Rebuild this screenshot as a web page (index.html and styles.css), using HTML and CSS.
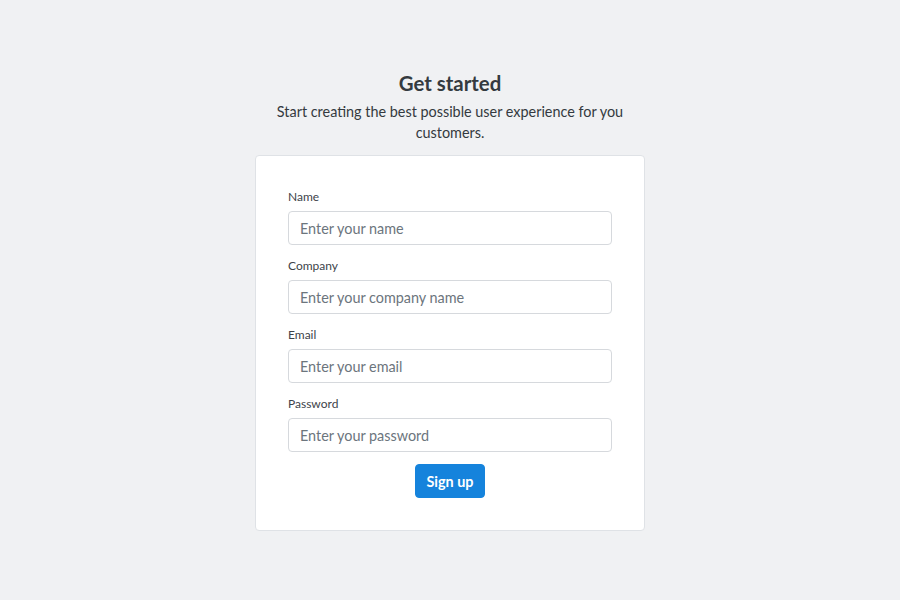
FILE: index.html
```html
<!DOCTYPE html>
<html lang="en">
<head>
<meta charset="utf-8">
<title>Get started</title>
<link rel="stylesheet" href="styles.css">
</head>
<body>
<main class="page">
  <div class="wrap">
    <h1 class="title">Get started</h1>
    <p class="subtitle">Start creating the best possible user experience for you customers.</p>
    <form class="card">
      <label class="field">
        <span class="label">Name</span>
        <input class="input" type="text" placeholder="Enter your name">
      </label>
      <label class="field">
        <span class="label">Company</span>
        <input class="input" type="text" placeholder="Enter your company name">
      </label>
      <label class="field">
        <span class="label">Email</span>
        <input class="input" type="email" placeholder="Enter your email">
      </label>
      <label class="field">
        <span class="label">Password</span>
        <input class="input" type="password" placeholder="Enter your password">
      </label>
      <div class="actions">
        <button class="btn" type="button">Sign up</button>
      </div>
    </form>
  </div>
</main>
</body>
</html>
```
FILE: styles.css
```css
* { box-sizing: border-box; }
html, body {
  margin: 0;
  padding: 0;
  background: #f0f1f3;
  font-family: Lato, "Open Sans", sans-serif;
  color: #343a40;
}
.page {
  display: flex;
  justify-content: center;
  padding-top: 71px;
  min-height: 600px;
}
.wrap {
  width: 390px;
  display: flex;
  flex-direction: column;
  align-items: center;
}
.title {
  margin: 0;
  font-size: 20.4px;
  line-height: 24px;
  font-weight: 700;
  color: #343a40;
  text-align: center;
}
.subtitle {
  margin: 6px 0 12px;
  max-width: 360px;
  font-size: 14.4px;
  line-height: 21px;
  text-align: center;
  color: #343a40;
}
.card {
  width: 390px;
  background: #fff;
  border: 1px solid #dfe2e6;
  border-radius: 4px;
  padding: 32px;
  display: flex;
  flex-direction: column;
  gap: 12px;
}
.field {
  display: flex;
  flex-direction: column;
  gap: 6px;
}
.label {
  font-size: 12px;
  line-height: 17px;
  color: #3d434a;
}
.input {
  height: 34px;
  width: 100%;
  border: 1px solid #d6d9dd;
  border-radius: 4px;
  padding: 0 12px 0 11px;
  font-family: Lato, "Open Sans", sans-serif;
  font-size: 14.4px;
  color: #343a40;
  background: #fff;
}
.input::placeholder {
  color: #6c757d;
  opacity: 1;
}
.actions {
  display: flex;
  justify-content: center;
}
.btn {
  height: 34px;
  padding: 0 10px;
  border: 1px solid #1583dc;
  border-radius: 4px;
  background: #1583dc;
  color: #fff;
  font-family: Lato, "Open Sans", sans-serif;
  font-size: 14.4px;
  font-weight: 700;
}
```
